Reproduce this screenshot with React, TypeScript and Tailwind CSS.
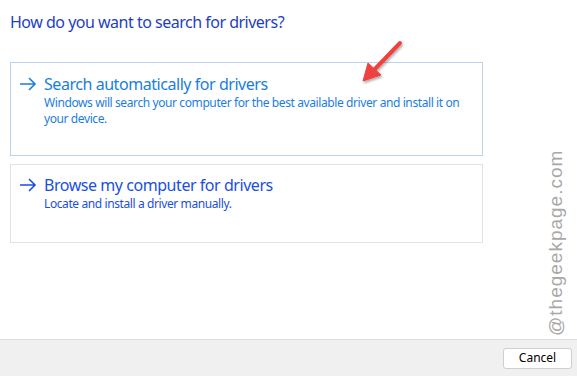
import React from 'react';

const font = { fontFamily: '"Noto Sans", "Open Sans", sans-serif' };

const Arrow = () => (
  <svg width="18" height="14" viewBox="0 0 18 14" className="shrink-0">
    <path d="M1 7h15M10 1l6 6-6 6" fill="none" stroke="currentColor" strokeWidth="1.6" />
  </svg>
);

const Option = ({
  title,
  desc,
  active,
  tone,
}: {
  title: string;
  desc: string;
  active?: boolean;
  tone: string;
}) => (
  <div
    className={`border ${active ? 'border-[#b9d4ef] h-[94px] pt-[10px]' : 'border-[#e3e3e3] h-[79px] pt-[9px]'} w-[473px] pl-[8px] pr-2`}
  >
    <div className={`flex items-center gap-[7px] ${tone}`}>
      <Arrow />
      <span className="text-[16px] leading-[22px] tracking-[-0.45px]">{title}</span>
    </div>
    <p className={`pl-[25px] text-[12px] leading-[16px] tracking-[-0.4px] ${tone}`}>{desc}</p>
  </div>
);

export default function App() {
  return (
    <div className="w-[577px] h-[376px] bg-white flex flex-col relative overflow-hidden" style={font}>
      <div className="flex-1 pl-[10px] pt-[11px]">
        <h1 className="text-[16px] leading-[22px] tracking-[-0.5px] text-[#1f3fbf]">How do you want to search for drivers?</h1>
        <div className="mt-[29px] flex flex-col gap-[8px]">
          <Option
            active
            tone="text-[#1a7ee0]"
            title="Search automatically for drivers"
            desc="Windows will search your computer for the best available driver and install it on your device."
          />
          <Option
            tone="text-[#1b4fe0]"
            title="Browse my computer for drivers"
            desc="Locate and install a driver manually."
          />
        </div>
      </div>
      <div className="h-[37px] border-t border-[#dcdcdc] bg-[#f0f0f0] flex items-center justify-end pr-[5px]">
        <button className="w-[69px] h-[21px] bg-white border border-[#cfcfcf] rounded-[3px] text-[12px] text-black">
          Cancel
        </button>
      </div>
      {/* annotation arrow */}
      <svg className="absolute left-[355px] top-[38px]" width="56" height="48" viewBox="0 0 56 48">
        <defs>
          <filter id="sh" x="-30%" y="-30%" width="160%" height="160%">
            <feDropShadow dx="1" dy="2" stdDeviation="1.3" floodColor="#000" floodOpacity="0.3" />
          </filter>
        </defs>
        <g filter="url(#sh)">
          <path d="M45 5 L19 32" stroke="#ee4340" strokeWidth="4" strokeLinecap="round" />
          <path d="M8 43 L13 25 L26 37 Z" fill="#ee4340" stroke="#ee4340" strokeWidth="1" strokeLinejoin="round" />
        </g>
      </svg>
      {/* watermark */}
      <div className="absolute left-[546px] top-[336px] origin-top-left -rotate-90 text-[19px] tracking-[1px] text-[#a8a8a8] whitespace-nowrap leading-none" style={{ fontFamily: '"Liberation Sans", Arial, sans-serif' }}>
        @thegeekpage.com
      </div>
    </div>
  );
}
